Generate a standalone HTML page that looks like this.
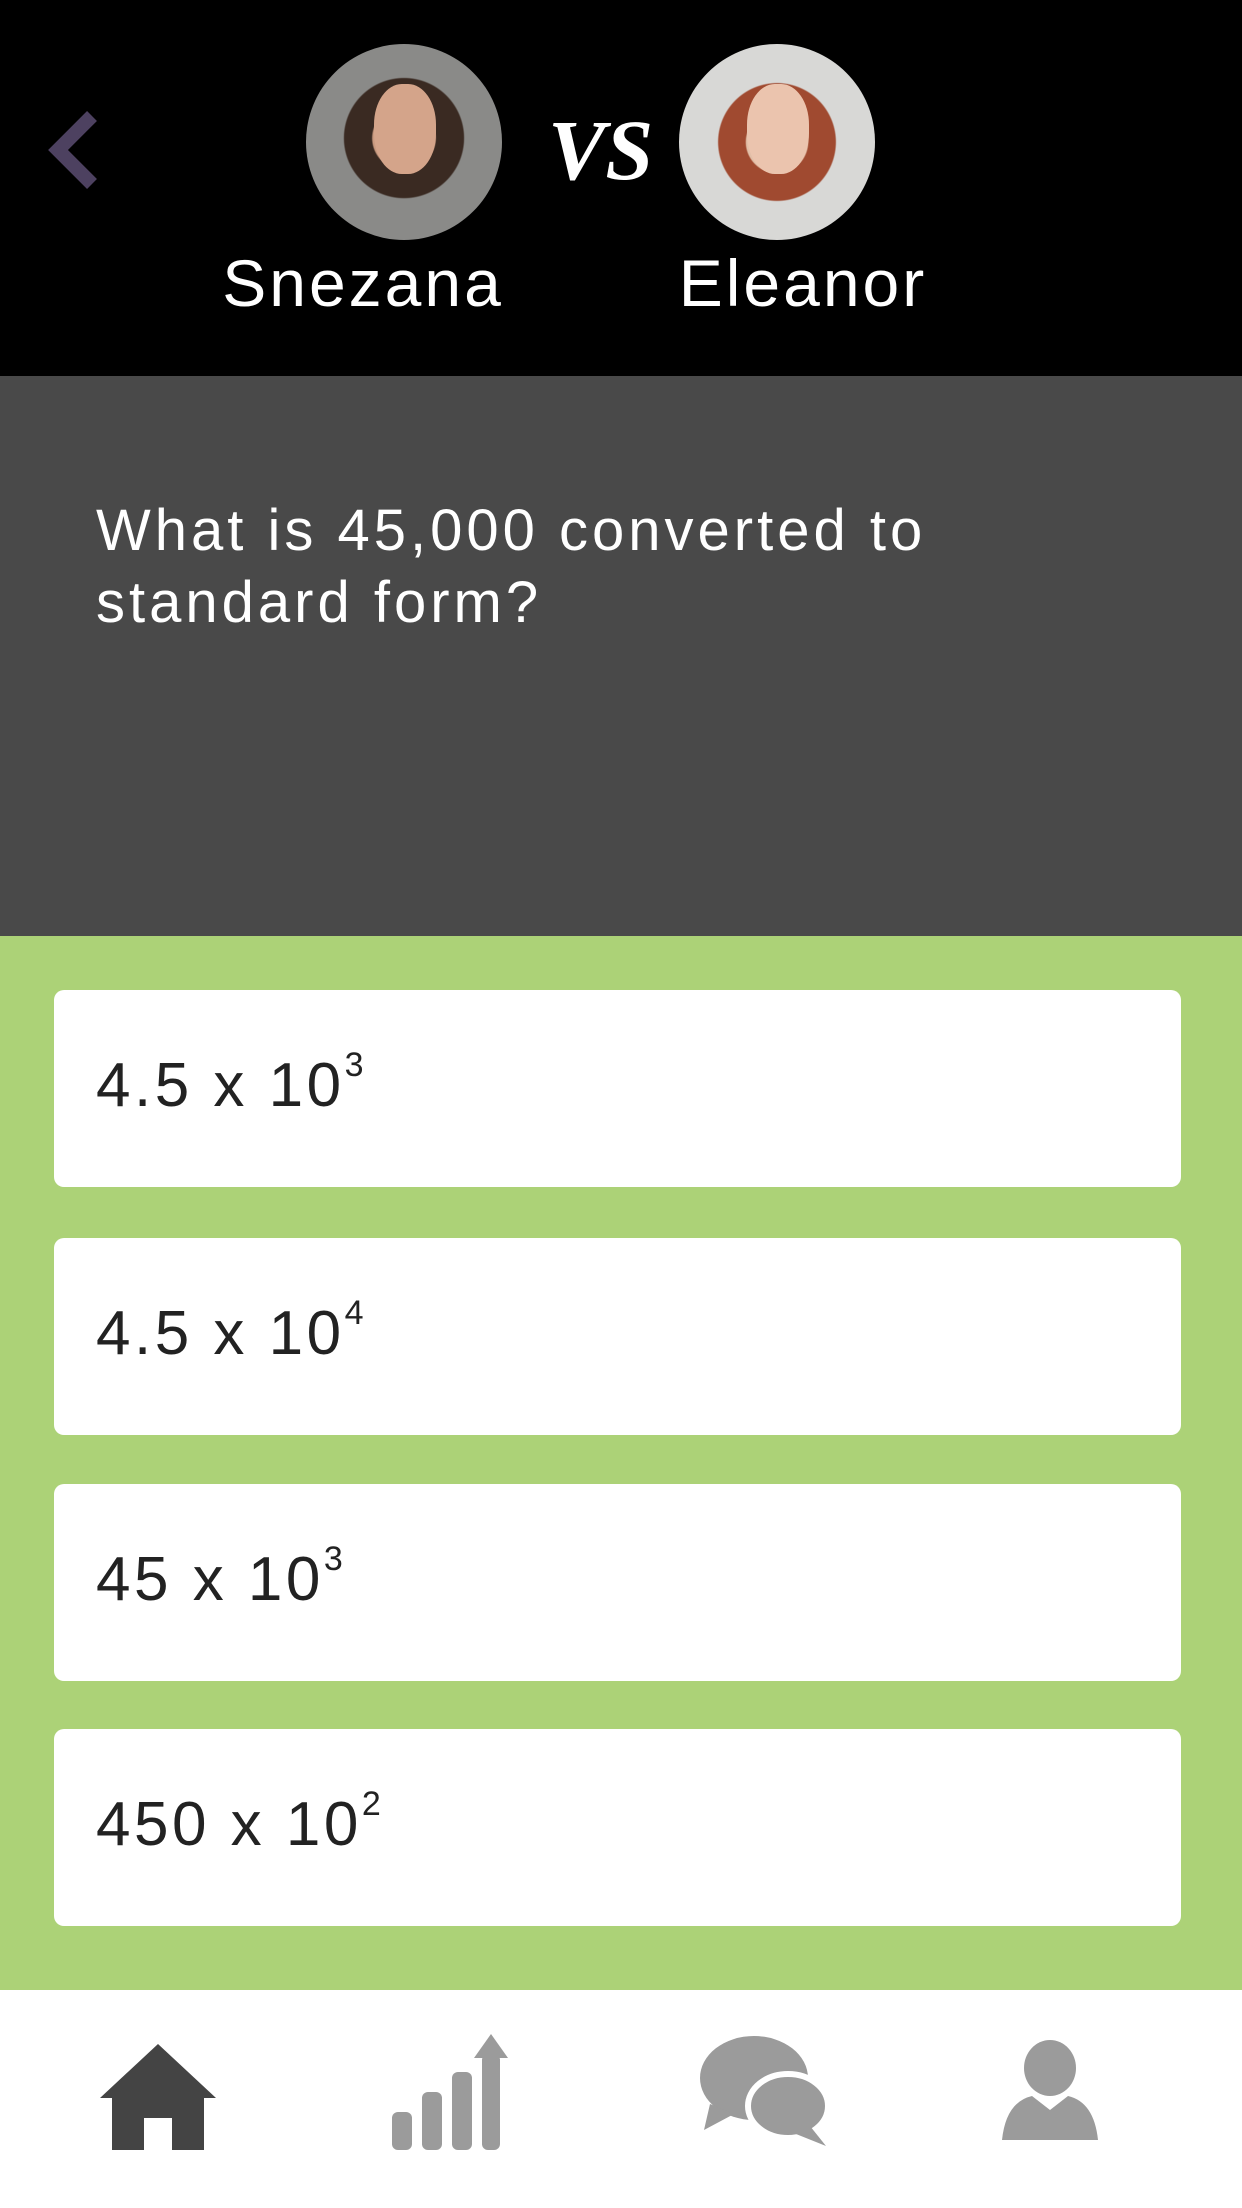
<!DOCTYPE html>
<html><head><meta charset="utf-8"><style>
*{margin:0;padding:0;box-sizing:border-box}
body{width:1242px;height:2208px;overflow:hidden;font-family:"Liberation Sans",sans-serif;background:#fff;position:relative}
.hdr{position:absolute;left:0;top:0;width:1242px;height:376px;background:#000}
.q{position:absolute;left:0;top:376px;width:1242px;height:560px;background:#494949}
.g{position:absolute;left:0;top:936px;width:1242px;height:1054px;background:#acd277}
.nav{position:absolute;left:0;top:1990px;width:1242px;height:218px;background:#fff}
.card{position:absolute;left:54px;width:1127px;height:197px;background:#fff;border-radius:10px}
.card span{position:absolute;left:42px;top:60px;font-size:62px;color:#222;letter-spacing:3.5px}
.card sup{font-size:34px;vertical-align:top;position:relative;top:-4px;letter-spacing:0}
.av{position:absolute;width:196px;height:196px;border-radius:50%;top:44px;overflow:hidden}
.name{position:absolute;top:245px;font-size:66px;color:#fff;text-align:center;width:400px;letter-spacing:3px}
.qt{position:absolute;left:96px;top:495px;font-size:58px;line-height:72px;color:#fff;letter-spacing:4px}
</style></head><body>
<div class="hdr">
<svg style="position:absolute;left:44px;top:110px" width="60" height="80" viewBox="0 0 60 80"><path d="M48 6 L14 40 L48 74" fill="none" stroke="#4d4160" stroke-width="14"/></svg>
<div class="av" style="left:306px;background:radial-gradient(circle at 50% 48%,#c99a80 0 22%,#3a2a22 23% 42%,#8a8a88 43%)"><div style="position:absolute;left:68px;top:40px;width:62px;height:90px;border-radius:45%;background:#d4a48a"></div></div>
<div style="position:absolute;left:548px;top:100px;font-size:86px;color:#fff;font-family:'Liberation Serif',serif;font-weight:bold;font-style:italic">VS</div>
<div class="av" style="left:679px;background:radial-gradient(circle at 50% 50%,#e2bfa8 0 22%,#a04a30 23% 42%,#d8d8d6 43%)"><div style="position:absolute;left:68px;top:40px;width:62px;height:90px;border-radius:45%;background:#ebc4ae"></div></div>
<div class="name" style="left:163px">Snezana</div>
<div class="name" style="left:603px">Eleanor</div>
</div>
<div class="q"></div>
<div class="qt">What is 45,000 converted to<br>standard form?</div>
<div class="g"></div>
<div class="card" style="top:990px"><span>4.5 x 10<sup>3</sup></span></div>
<div class="card" style="top:1238px"><span>4.5 x 10<sup>4</sup></span></div>
<div class="card" style="top:1484px"><span>45 x 10<sup>3</sup></span></div>
<div class="card" style="top:1729px"><span>450 x 10<sup>2</sup></span></div>
<div class="nav">
<svg style="position:absolute;left:96px;top:50px" width="124" height="112" viewBox="0 0 124 112"><path d="M62 4 L120 58 L108 58 L108 110 L76 110 L76 78 L48 78 L48 110 L16 110 L16 58 L4 58 Z" fill="#444"/></svg>
<svg style="position:absolute;left:392px;top:44px" width="116" height="116" viewBox="0 0 116 116"><g fill="#9b9b9b"><rect x="0" y="78" width="20" height="38" rx="6"/><rect x="30" y="58" width="20" height="58" rx="6"/><rect x="60" y="38" width="20" height="78" rx="6"/><rect x="90" y="20" width="18" height="96" rx="6"/><path d="M99 0 L116 24 L82 24 Z"/></g></svg>
<svg style="position:absolute;left:700px;top:44px" width="128" height="116" viewBox="0 0 128 116"><g fill="#9b9b9b"><ellipse cx="54" cy="44" rx="54" ry="42"/><path d="M10 70 L4 96 L34 80 Z"/><ellipse cx="88" cy="72" rx="40" ry="32" stroke="#fff" stroke-width="6"/><path d="M110 92 L126 112 L96 100 Z"/></g></svg>
<svg style="position:absolute;left:1002px;top:50px" width="96" height="102" viewBox="0 0 96 102"><g fill="#9b9b9b"><ellipse cx="48" cy="28" rx="26" ry="28"/><path d="M0 100 Q4 62 30 56 L48 70 L66 56 Q92 62 96 100 Z"/></g></svg>
</div>
</body></html>
